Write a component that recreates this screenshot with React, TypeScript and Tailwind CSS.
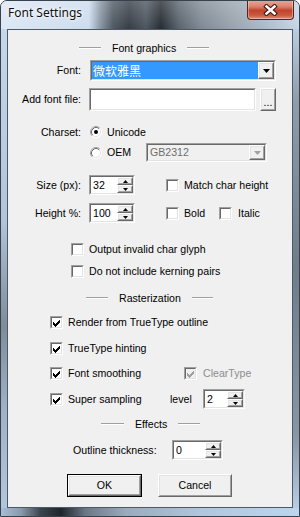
import type { ReactNode } from "react";

function Sunken({
  className = "",
  inner = "bg-white",
  children,
}: {
  className?: string;
  inner?: string;
  children?: ReactNode;
}) {
  return (
    <div
      className={`border border-t-[#a0a0a0] border-l-[#a0a0a0] border-r-white border-b-white ${className}`}
    >
      <div
        className={`flex h-full w-full border border-t-[#696969] border-l-[#696969] border-r-[#e3e3e3] border-b-[#e3e3e3] ${inner}`}
      >
        {children}
      </div>
    </div>
  );
}

function Raised({ className = "", children }: { className?: string; children?: ReactNode }) {
  return (
    <div
      className={`border border-t-white border-l-white border-r-[#696969] border-b-[#696969] bg-[#f0f0f0] ${className}`}
    >
      <div className="flex h-full w-full items-center justify-center border border-t-[#e3e3e3] border-l-[#e3e3e3] border-r-[#a0a0a0] border-b-[#a0a0a0]">
        {children}
      </div>
    </div>
  );
}

// classic 7x7 tick, one column at a time
const tickColumns = [
  [1, 4],
  [2, 5],
  [3, 6],
  [4, 5],
  [5, 4],
  [6, 3],
  [7, 2],
];

function CheckBox({ checked = false, disabled = false }: { checked?: boolean; disabled?: boolean }) {
  return (
    <Sunken className="h-[13px] w-[13px] shrink-0" inner={disabled ? "bg-[#f0f0f0]" : "bg-white"}>
      {checked && (
        <svg width="9" height="9" viewBox="0 0 9 9" shapeRendering="crispEdges" aria-hidden>
          {tickColumns.map(([x, y]) => (
            <rect key={x} x={x} y={y} width="1" height="3" fill={disabled ? "#a0a0a0" : "#000"} />
          ))}
        </svg>
      )}
    </Sunken>
  );
}

function Radio({ checked = false }: { checked?: boolean }) {
  return (
    <svg width="12" height="12" viewBox="0 0 12 12" className="shrink-0" aria-hidden>
      <circle cx="6" cy="6" r="5" fill="#fff" />
      <path d="M2.11 9.89 A5.5 5.5 0 0 1 9.89 2.11" fill="none" stroke="#a0a0a0" />
      <path d="M9.89 2.11 A5.5 5.5 0 0 1 2.11 9.89" fill="none" stroke="#fff" />
      <path d="M2.82 9.18 A4.5 4.5 0 0 1 9.18 2.82" fill="none" stroke="#696969" />
      <path d="M9.18 2.82 A4.5 4.5 0 0 1 2.82 9.18" fill="none" stroke="#e3e3e3" />
      {checked && <circle cx="6" cy="6" r="2" fill="#000" />}
    </svg>
  );
}

function DropArrow({ color = "#000" }: { color?: string }) {
  return (
    <svg width="7" height="4" viewBox="0 0 7 4" aria-hidden>
      <polygon points="0,0 7,0 3.5,4" fill={color} />
    </svg>
  );
}

function SpinEdit({ value, width }: { value: string; width: string }) {
  return (
    <Sunken className={`h-[20px] shrink-0 ${width}`}>
      <div className="flex-1 pl-[2px] leading-[16px]">{value}</div>
      <div className="flex w-[16px] flex-col">
        <Raised className="h-[8px] w-full">
          <svg width="5" height="3" viewBox="0 0 5 3" aria-hidden>
            <polygon points="0,3 2.5,0 5,3" fill="#000" />
          </svg>
        </Raised>
        <Raised className="h-[8px] w-full">
          <svg width="5" height="3" viewBox="0 0 5 3" aria-hidden>
            <polygon points="0,0 5,0 2.5,3" fill="#000" />
          </svg>
        </Raised>
      </div>
    </Sunken>
  );
}

function Header({
  text,
  indent,
  left,
  right,
}: {
  text: string;
  indent: string;
  left: string;
  right: string;
}) {
  return (
    <div className={`flex h-[14px] items-center ${indent}`}>
      <div className={`h-[2px] border-t border-t-[#a0a0a0] border-b border-b-white ${left}`} />
      <span className="px-[11px]">{text}</span>
      <div className={`h-[2px] border-t border-t-[#a0a0a0] border-b border-b-white ${right}`} />
    </div>
  );
}

export default function App() {
  return (
    <div className="flex h-[517px] w-[300px] flex-col overflow-hidden rounded-t-[7px] border border-[#38424d] bg-[#bcd0e6] font-['Liberation_Sans',Arial,sans-serif] text-[10.6px] leading-[13px] text-black">
      {/* title bar */}
      <div className="flex h-[28px] shrink-0 bg-[linear-gradient(180deg,rgba(255,255,255,0.2),rgba(255,255,255,0)),linear-gradient(90deg,#dce8f5_0px,#cddced_88px,#8592a0_100px,#4f5963_112px,#363d45_128px,#4d5660_145px,#262c32_160px,#5a646e_178px,#7f8994_200px,#98a2ac_230px,#aab8c6_260px,#c8d8e8_300px)]">
        <div className="pl-[7px] pt-[4px] font-['Noto_Sans',sans-serif] text-[12px] leading-[16px] text-[#101010] [text-shadow:0_0_6px_#fff,0_0_3px_#fff]">
          Font Settings
        </div>
        <div className="mr-[5px] ml-auto -mt-px flex h-[20px] w-[47px] items-center justify-center rounded-b-[4px] border border-t-0 border-[#53261f] bg-[linear-gradient(180deg,#e9a99a_0%,#d9826f_35%,#c2432c_55%,#c85a3e_80%,#e0907a_100%)] shadow-[inset_0_0_0_1px_rgba(255,255,255,0.35)]">
          <svg width="15" height="12" viewBox="0 0 15 12" aria-hidden>
            <path d="M3.5 2.5 L11.5 9.5 M11.5 2.5 L3.5 9.5" stroke="#3b1b16" strokeWidth="4.6" strokeLinecap="square" />
            <path d="M3.5 2.5 L11.5 9.5 M11.5 2.5 L3.5 9.5" stroke="#fff" strokeWidth="2.5" strokeLinecap="square" />
          </svg>
        </div>
      </div>

      <div className="flex h-[479px] shrink-0">
        <div className="w-[6px] bg-[linear-gradient(180deg,#c6d7ea_0%,#b0c4da_40%,#7f8c9a_62%,#9fb3c8_80%,#b3c7dc_100%)]" />

        {/* client area */}
        <div className="flex w-[286px] flex-col border border-[#4e5966] bg-[#f0f0f0]">
          <div className="mt-[11px]">
            <Header text="Font graphics" indent="ml-[71px]" left="w-[22px]" right="w-[22px]" />
          </div>

          <div className="mt-[5px] flex h-[21px] items-center">
            <div className="w-[73px] text-right">Font:</div>
            <Sunken className="ml-[9px] h-[21px] w-[186px]">
              <div className="flex flex-1 items-center bg-[#3399ff] pl-px font-['Noto_Sans_CJK_SC',sans-serif] text-[12px] leading-[15px] text-white">
                微软雅黑
              </div>
              <Raised className="h-full w-[16px]">
                <DropArrow />
              </Raised>
            </Sunken>
          </div>

          <div className="mt-[7px] flex h-[23px] items-center">
            <div className="w-[73px] text-right">Add font file:</div>
            <Sunken className="ml-[8px] h-[23px] w-[167px]" />
            <Raised className="ml-[4px] h-[23px] w-[16px]">
              <span className="mt-[5px]">...</span>
            </Raised>
          </div>

          <div className="mt-[14px] flex h-[14px] items-center">
            <div className="w-[73px] text-right">Charset:</div>
            <div className="ml-[9px]">
              <Radio checked />
            </div>
            <span className="ml-[5px]">Unicode</span>
          </div>

          <div className="mt-[4px] flex h-[19px] items-center">
            <div className="w-[73px]" />
            <div className="ml-[9px]">
              <Radio />
            </div>
            <span className="ml-[5px] w-[39px]">OEM</span>
            <Sunken className="h-[19px] w-[121px]" inner="bg-[#f0f0f0]">
              <div className="flex flex-1 items-center pl-[2px] text-[#6d6d6d]">GB2312</div>
              <Raised className="h-full w-[16px]">
                <DropArrow color="#a0a0a0" />
              </Raised>
            </Sunken>
          </div>

          <div className="mt-[13px] flex h-[20px] items-center">
            <div className="w-[73px] text-right">Size (px):</div>
            <div className="ml-[8px]">
              <SpinEdit value="32" width="w-[46px]" />
            </div>
            <div className="ml-[31px]">
              <CheckBox />
            </div>
            <span className="ml-[5px]">Match char height</span>
          </div>

          <div className="mt-[8px] flex h-[20px] items-center">
            <div className="w-[73px] text-right">Height %:</div>
            <div className="ml-[8px]">
              <SpinEdit value="100" width="w-[46px]" />
            </div>
            <div className="ml-[31px]">
              <CheckBox />
            </div>
            <span className="ml-[5px] w-[35px]">Bold</span>
            <CheckBox />
            <span className="ml-[6px]">Italic</span>
          </div>

          <div className="mt-[19px] flex h-[14px] items-center pl-[63px]">
            <CheckBox />
            <span className="ml-[5px]">Output invalid char glyph</span>
          </div>

          <div className="mt-[8px] flex h-[14px] items-center pl-[63px]">
            <CheckBox />
            <span className="ml-[5px]">Do not include kerning pairs</span>
          </div>

          <div className="mt-[13px]">
            <Header text="Rasterization" indent="ml-[78px]" left="w-[22px]" right="w-[21px]" />
          </div>

          <div className="mt-[10px] flex h-[14px] items-center pl-[42px]">
            <CheckBox checked />
            <span className="ml-[5px]">Render from TrueType outline</span>
          </div>

          <div className="mt-[12px] flex h-[14px] items-center pl-[42px]">
            <CheckBox checked />
            <span className="ml-[5px]">TrueType hinting</span>
          </div>

          <div className="mt-[11px] flex h-[14px] items-center pl-[42px]">
            <CheckBox checked />
            <span className="ml-[5px] w-[116px]">Font smoothing</span>
            <CheckBox checked disabled />
            <span className="ml-[6px] text-[#8d8d8d]">ClearType</span>
          </div>

          <div className="mt-[9px] flex h-[20px] items-center pl-[42px]">
            <CheckBox checked />
            <span className="ml-[5px] w-[102px]">Super sampling</span>
            <span className="w-[33px]">level</span>
            <SpinEdit value="2" width="w-[42px]" />
          </div>

          <div className="mt-[8px]">
            <Header text="Effects" indent="ml-[93px]" left="w-[23px]" right="w-[22px]" />
          </div>

          <div className="mt-[9px] flex h-[20px] items-center pl-[65px]">
            <span className="w-[99px]">Outline thickness:</span>
            <SpinEdit value="0" width="w-[51px]" />
          </div>

          <div className="mt-[14px] flex h-[23px] items-center pl-[59px]">
            <div className="h-[23px] w-[75px] border border-black">
              <Raised className="h-full w-full">OK</Raised>
            </div>
            <Raised className="ml-[16px] h-[23px] w-[74px]">Cancel</Raised>
          </div>
        </div>

        <div className="w-[6px] bg-[linear-gradient(180deg,#b9cde2_0%,#8e9cab_15%,#6f7c8a_50%,#8896a5_85%,#b6cde4_100%)]" />
      </div>

      <div className="h-[8px] shrink-0 bg-[linear-gradient(90deg,#a8bed6_0px,#8a9aac_20px,#3a434c_40px,#20262c_60px,#6c7886_85px,#9aabbc_125px,#b0c6dc_200px,#bcd6f0_300px)]" />
    </div>
  );
}
